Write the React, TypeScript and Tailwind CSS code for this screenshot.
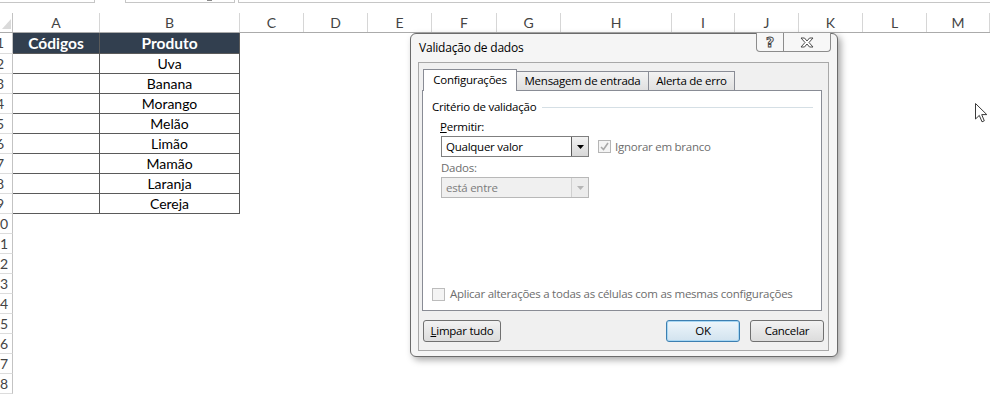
import React from 'react';

const columns = [
  { label: 'A', w: 'w-[87px]' },
  { label: 'B', w: 'w-[140px]' },
  { label: 'C', w: 'w-[64px]' },
  { label: 'D', w: 'w-[64px]' },
  { label: 'E', w: 'w-[64px]' },
  { label: 'F', w: 'w-[65px]' },
  { label: 'G', w: 'w-[64px]' },
  { label: 'H', w: 'w-[111px]' },
  { label: 'I', w: 'w-[63px]' },
  { label: 'J', w: 'w-[64px]' },
  { label: 'K', w: 'w-[64px]' },
  { label: 'L', w: 'w-[64px]' },
  { label: 'M', w: 'w-[63px]' },
];

const produtos = ['Uva', 'Banana', 'Morango', 'Melão', 'Limão', 'Mamão', 'Laranja', 'Cereja'];

const rows = Array.from({ length: 18 }, (_, i) => i + 1);

function SheetRow({ n }: { n: number }) {
  const header = n === 1;
  const inTable = n <= 9;
  return (
    <div className={header ? 'flex h-[21px] shrink-0' : 'flex h-[20px] shrink-0'}>
      <div className="w-[13px] shrink-0 overflow-hidden border-r border-b border-r-[#c3c3c3] border-b-[#dcdcdc]">
        <div className="w-[28px] -ml-[14px] text-center text-[14px] leading-[19px] text-[#444]">{n}</div>
      </div>
      {inTable && (
        <>
          <div
            className={
              header
                ? 'w-[87px] shrink-0 border-r border-b border-[#5a5a5a] bg-[#323f4f] text-center text-[15.5px] font-bold leading-[20px] text-white'
                : 'w-[87px] shrink-0 border-r border-b border-[#5a5a5a]'
            }
          >
            {header ? 'Códigos' : ''}
          </div>
          <div
            className={
              header
                ? 'w-[140px] shrink-0 border-r border-b border-[#5a5a5a] bg-[#323f4f] text-center text-[15.5px] font-bold leading-[20px] text-white'
                : 'w-[140px] shrink-0 border-r border-b border-[#5a5a5a] text-center text-[14px] leading-[20px] text-black'
            }
          >
            {header ? 'Produto' : produtos[n - 2]}
          </div>
        </>
      )}
    </div>
  );
}

function Sheet() {
  return (
    <div className="flex flex-col font-['Lato',sans-serif]">
      {/* ribbon remains at the top */}
      <div className="flex h-[13px] shrink-0">
        <div className="w-[95px] h-[3px] border-r border-b border-[#c6c6c6]" />
        <div className="w-[30px]" />
        <div className="relative w-[110px] h-[3px] border-x border-b border-[#c6c6c6]">
          <div className="absolute left-[81px] top-0 w-[5px] h-[1px] bg-[#8a8a8a]" />
        </div>
        <div className="w-[3px]" />
        <div className="flex-1 h-[3px] border-l border-b border-[#c6c6c6]" />
      </div>

      {/* column headers */}
      <div className="flex h-[20px] shrink-0 border-b border-[#ababab]">
        <div className="w-[13px] shrink-0 border-r border-[#c3c3c3] flex items-end justify-start pl-[2px] pb-[3px]">
          <svg width="9" height="10" viewBox="0 0 9 10">
            <polygon points="9,0 9,10 0,10" fill="#dadada" />
          </svg>
        </div>
        {columns.map((c) => (
          <div
            key={c.label}
            className={`${c.w} shrink-0 border-r border-[#d6d6d6] text-center text-[14px] leading-[19px] text-[#444]`}
          >
            {c.label}
          </div>
        ))}
      </div>

      {rows.map((n) => (
        <SheetRow key={n} n={n} />
      ))}
    </div>
  );
}

function Check({ color }: { color: string }) {
  return (
    <svg width="11" height="11" viewBox="0 0 11 11">
      <polyline points="2,6 4.5,8.5 9,2" fill="none" stroke={color} strokeWidth="1.6" />
    </svg>
  );
}

function Dialog() {
  return (
    <div className="absolute left-[410px] top-[33px] w-[428px] h-[324px] rounded-[6px] border border-[#6b6b6b] bg-[#f5f5f5] shadow-[3px_3px_7px_rgba(0,0,0,0.35)] flex flex-col font-['Open_Sans',sans-serif] text-[11.5px] tracking-[-0.25px] text-black">
      <div className="relative h-[28px] shrink-0 flex items-center pl-[8px] text-[12px] tracking-[-0.2px]">
        Validação de dados
        <div className="absolute right-[6px] -top-px flex">
          <div className="w-[28px] h-[19px] border border-t-0 border-[#8c8c8c] rounded-bl-[4px] bg-[#f7f7f7] flex items-center justify-center">
            <span className="font-['DejaVu_Sans',sans-serif] text-[14px] font-bold leading-none text-white [-webkit-text-stroke:1px_#4a4a4a]">?</span>
          </div>
          <div className="w-[47px] h-[19px] border border-t-0 border-l-0 border-[#8c8c8c] rounded-br-[4px] bg-[#f7f7f7] flex items-center justify-center">
            <svg width="14" height="11" viewBox="0 0 14 11">
              <path
                d="M1 1 H4.5 L7 4 L9.5 1 H13 L9 5.5 L13 10 H9.5 L7 7 L4.5 10 H1 L5 5.5 Z"
                fill="white"
                stroke="#4a4a4a"
                strokeWidth="1"
              />
            </svg>
          </div>
        </div>
      </div>

      <div className="flex-1 ml-[7px] mr-[8px] mb-[5px] border border-[#a8a8a8] bg-[#f0f0f0] flex flex-col">
        {/* tabs */}
        <div className="relative z-10 flex items-end ml-[4px] mt-[6px] h-[22px]">
          <div className="w-[94px] h-[22px] border border-b-0 border-[#898c95] bg-white flex items-center justify-center pb-[1px]">
            Configurações
          </div>
          <div className="w-[132px] h-[20px] border border-l-0 border-[#898c95] bg-linear-to-b from-[#f3f3f3] to-[#e0e0e0] flex items-center justify-center">
            Mensagem de entrada
          </div>
          <div className="w-[86px] h-[20px] border border-l-0 border-[#898c95] bg-linear-to-b from-[#f3f3f3] to-[#e0e0e0] flex items-center justify-center">
            Alerta de erro
          </div>
        </div>

        {/* tab panel */}
        <div className="-mt-px ml-[3px] w-[400px] h-[221px] border border-[#898c95] bg-white flex flex-col">
          <div className="mt-[8px] h-[16px] flex items-center pl-[9px] pr-[8px]">
            <span>Critério de validação</span>
            <div className="flex-1 ml-[6px] h-px bg-[#d5dfe5]" />
          </div>
          <div className="mt-[4px] h-[16px] flex items-center pl-[17px]">
            <span>
              <span className="underline">P</span>ermitir:
            </span>
          </div>
          <div className="mt-[1px] flex items-center pl-[18px]">
            <div className="w-[148px] h-[21px] border border-[#7f7f7f] bg-white flex">
              <div className="flex-1 pl-[4px] flex items-center">Qualquer valor</div>
              <div className="w-[17px] h-full border-l border-[#5a5a5a] bg-linear-to-b from-[#f2f2f2] to-[#d8d8d8] flex items-center justify-center">
                <svg width="7" height="4" viewBox="0 0 7 4">
                  <polygon points="0,0 7,0 3.5,4" fill="#000" />
                </svg>
              </div>
            </div>
            <div className="ml-[9px] w-[13px] h-[13px] border border-[#b5b5b5] bg-[#f4f4f4] flex items-center justify-center">
              <Check color="#a8a8a8" />
            </div>
            <span className="ml-[4px] text-[#6d6d6d]">Ignorar em branco</span>
          </div>
          <div className="mt-[3px] h-[16px] flex items-center pl-[18px] text-[#6d6d6d]">Dados:</div>
          <div className="mt-[1px] pl-[18px]">
            <div className="w-[148px] h-[21px] border border-[#b8b8b8] bg-[#f0f0f0] flex text-[#7d7d7d]">
              <div className="flex-1 pl-[4px] flex items-center">está entre</div>
              <div className="w-[17px] h-full border-l border-[#d0d0d0] bg-[#ececec] flex items-center justify-center">
                <svg width="7" height="4" viewBox="0 0 7 4">
                  <polygon points="0,0 7,0 3.5,4" fill="#b5b5b5" />
                </svg>
              </div>
            </div>
          </div>
          <div className="mt-auto mb-[8px] h-[16px] flex items-center pl-[9px]">
            <div className="w-[13px] h-[13px] border border-[#bcbcbc] bg-[#f4f4f4]" />
            <span className="ml-[5px] text-[#6d6d6d]">Aplicar alterações a todas as células com as mesmas configurações</span>
          </div>
        </div>

        {/* buttons */}
        <div className="mt-[9px] flex ml-[4px] mr-[4px]">
          <div className="w-[78px] h-[22px] rounded-[3px] border border-[#707070] bg-linear-to-b from-[#f2f2f2] to-[#dcdcdc] flex items-center justify-center">
            <span>
              <span className="underline">L</span>impar tudo
            </span>
          </div>
          <div className="flex-1" />
          <div className="w-[74px] h-[22px] rounded-[3px] border border-[#3c7fb1] bg-linear-to-b from-[#eef6fb] to-[#d2e3ef] shadow-[inset_0_0_0_1px_#a8d7f3] flex items-center justify-center">
            OK
          </div>
          <div className="ml-[10px] w-[74px] h-[22px] rounded-[3px] border border-[#707070] bg-linear-to-b from-[#f2f2f2] to-[#dcdcdc] flex items-center justify-center">
            Cancelar
          </div>
        </div>
      </div>
    </div>
  );
}

export default function App() {
  return (
    <div className="relative w-[990px] h-[397px] overflow-hidden bg-white">
      <Sheet />
      <Dialog />
      {/* mouse pointer */}
      <svg className="absolute left-[975px] top-[103px]" width="13" height="21" viewBox="0 0 13 21">
        <path d="M0.5 0.5 L0.5 16 L4.3 12.4 L7 18.8 L9.3 17.8 L6.7 11.6 L11.8 11.6 Z" fill="white" stroke="#3a3a3a" strokeWidth="1" />
      </svg>
    </div>
  );
}
